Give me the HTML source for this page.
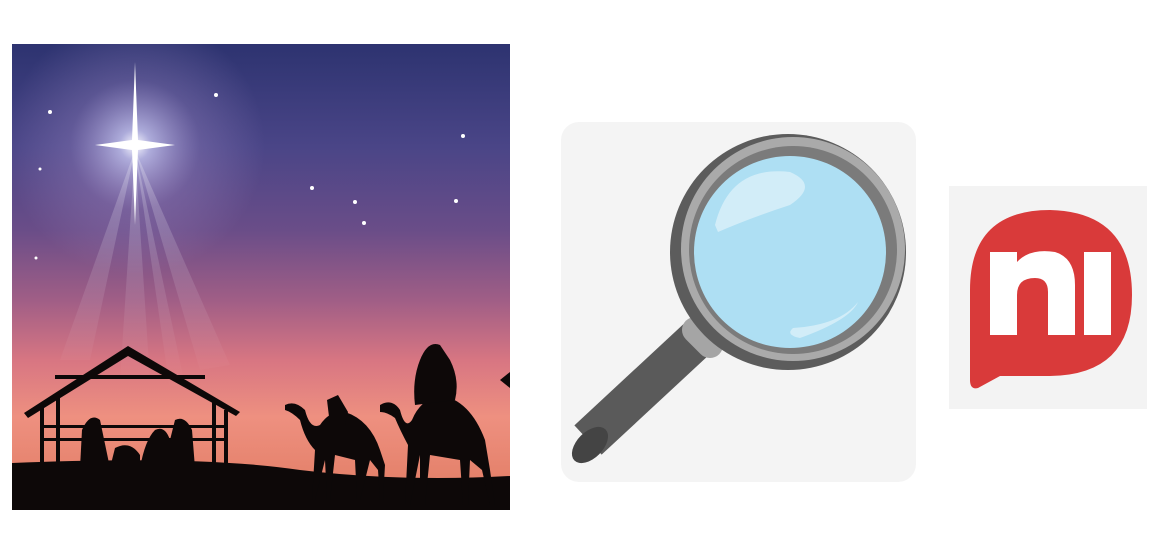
<!DOCTYPE html>
<html><head><style>
html,body{margin:0;padding:0;background:#fff;width:1154px;height:545px;overflow:hidden}
svg{position:absolute;left:0;top:0}
</style></head><body>
<svg width="1154" height="545" viewBox="0 0 1154 545" xmlns="http://www.w3.org/2000/svg">
<defs>
<linearGradient id="sky" x1="0" y1="0" x2="0" y2="1">
<stop offset="0" stop-color="#2d3370"/>
<stop offset="0.22" stop-color="#4a4587"/>
<stop offset="0.4" stop-color="#6a4d88"/>
<stop offset="0.55" stop-color="#a05e86"/>
<stop offset="0.68" stop-color="#d87682"/>
<stop offset="0.8" stop-color="#ee9080"/>
<stop offset="1" stop-color="#e07a60"/>
</linearGradient>
<radialGradient id="glow" cx="135" cy="145" r="130" gradientUnits="userSpaceOnUse">
<stop offset="0" stop-color="#fff" stop-opacity="1"/>
<stop offset="0.12" stop-color="#d8d8ff" stop-opacity="0.7"/>
<stop offset="0.5" stop-color="#b8a0d8" stop-opacity="0.25"/>
<stop offset="1" stop-color="#b8a0d8" stop-opacity="0"/>
</radialGradient>
<linearGradient id="beam" x1="0" y1="0" x2="0" y2="1">
<stop offset="0" stop-color="#fff" stop-opacity="0.5"/>
<stop offset="1" stop-color="#fff" stop-opacity="0"/>
</linearGradient>
<clipPath id="pc"><rect x="12" y="44" width="498" height="466"/></clipPath>
</defs>
<g clip-path="url(#pc)">
<rect x="12" y="44" width="498" height="466" fill="url(#sky)"/>
<circle cx="135" cy="145" r="130" fill="url(#glow)"/>
<path d="M135 150 L60 360 L90 360Z M135 150 L120 380 L150 380Z M135 150 L200 370 L230 365Z M135 150 L170 390 L185 385Z" fill="url(#beam)" opacity="0.5"/>
<path d="M135 62 L138 140 L175 145 L138 150 L135 225 L132 150 L95 145 L132 140Z" fill="#fff"/>
<g fill="#fff">
<circle cx="216" cy="95" r="2"/><circle cx="50" cy="112" r="2"/><circle cx="463" cy="136" r="2"/>
<circle cx="40" cy="169" r="1.5"/><circle cx="312" cy="188" r="2"/><circle cx="355" cy="202" r="2"/>
<circle cx="456" cy="201" r="2"/><circle cx="364" cy="223" r="2"/><circle cx="36" cy="258" r="1.5"/>
</g>
<g fill="#0d0808">
<path d="M12 463 Q200 455 300 470 Q400 482 510 476 L510 510 L12 510Z"/>
<path d="M24 413 L128 346 L240 412 L236 416 L128 356 L28 418Z"/>
<rect x="55" y="375" width="150" height="4"/>
<rect x="40" y="408" width="4" height="60"/><rect x="56" y="395" width="4" height="70"/>
<rect x="212" y="400" width="4" height="68"/><rect x="224" y="410" width="4" height="58"/>
<rect x="40" y="425" width="185" height="3"/><rect x="40" y="438" width="185" height="3"/>
<path d="M80 468 L82 430 Q90 412 100 420 L110 468Z"/>
<path d="M140 468 Q145 440 155 430 Q165 425 170 440 L175 420 Q185 415 192 430 L195 468Z"/>
<path d="M110 468 L115 448 Q130 440 140 455 L140 468Z"/>
<path d="M285 405 Q295 400 305 410 Q310 430 320 425 Q330 410 345 412 Q370 420 380 450 L385 465 L383 500 L380 500 L378 470 L370 460 L360 500 L357 500 L355 460 L335 455 L330 500 L327 500 L325 460 L315 500 L312 500 L315 450 Q305 440 300 420 Q292 412 285 410Z"/>
<path d="M327 400 L338 395 L348 412 L345 425 L330 425Z"/>
<path d="M380 405 Q392 398 400 410 Q405 430 412 420 Q420 400 440 395 Q470 400 485 440 L490 470 L495 505 L490 505 L482 470 L470 460 L468 505 L463 505 L460 460 L430 455 L425 505 L420 505 L420 455 L410 505 L405 505 L408 445 Q400 430 395 418 Q387 412 380 412Z"/>
<path d="M420 360 Q428 340 440 345 L450 360 Q460 380 455 400 L415 405 Q412 380 420 360Z"/>
<path d="M500 380 L510 372 L510 388Z"/>
</g>
</g>
<rect x="561" y="122" width="355" height="360" rx="18" fill="#f4f4f4"/>
<path d="M700 336 L588 440" stroke="#5a5a5a" stroke-width="40" stroke-linecap="butt"/>
<ellipse cx="590" cy="445" rx="13" ry="22" transform="rotate(45 590 445)" fill="#444"/>
<path d="M695 330 L710 345" stroke="#a5a5a5" stroke-width="26" stroke-linecap="round"/>
<circle cx="788" cy="252" r="118" fill="#5c5c5c"/>
<circle cx="793" cy="249" r="112" fill="#aaaaaa"/>
<circle cx="793" cy="250" r="104" fill="#5c5c5c" opacity="0.6"/>
<circle cx="790" cy="252" r="96" fill="#aedff3"/>
<path d="M715 225 Q730 165 790 172 Q820 185 790 205 Q750 218 718 232Z" fill="#fff" opacity="0.45"/>
<path d="M793 328 Q840 325 858 302 Q850 320 800 338 Q785 335 793 328Z" fill="#fff" opacity="0.45"/>
<rect x="949" y="186" width="198" height="223" fill="#f3f3f3"/>
<path d="M1050 210 Q1132 212 1132 295 Q1132 375 1050 376 L1000 376 L978 388 Q970 390 970 380 L970 290 Q970 210 1050 210Z" fill="#d93a3a"/>
<path d="M990 252 L1017 252 L1017 262 Q1030 248 1055 252 Q1075 258 1075 285 L1075 335 L1048 335 L1048 292 Q1048 278 1035 278 Q1017 278 1017 295 L1017 335 L990 335Z" fill="#fff"/>
<rect x="1084" y="252" width="27" height="83" fill="#fff"/>
</svg>
</body></html>
